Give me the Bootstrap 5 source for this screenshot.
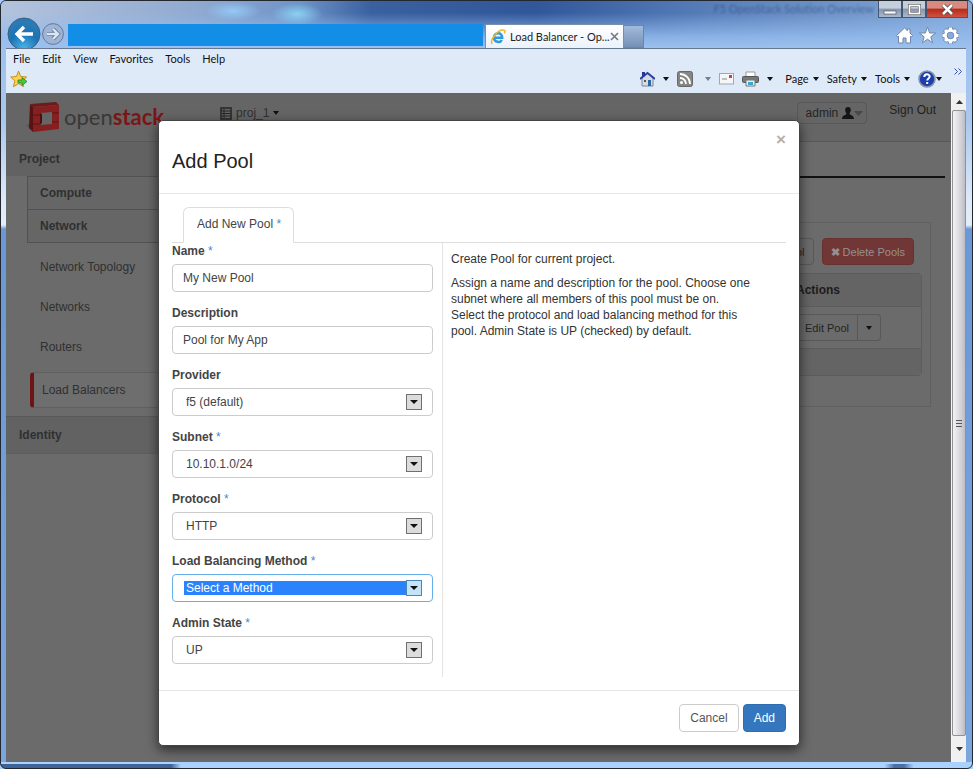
<!DOCTYPE html>
<html lang="en">
<head>
<meta charset="utf-8">
<meta name="viewport" content="width=device-width, initial-scale=1">
<title>Load Balancer - OpenStack Dashboard</title>
<link rel="stylesheet" href="https://cdn.jsdelivr.net/npm/bootstrap@5.3.0/dist/css/bootstrap.min.css">
<style>
  body { font: 12px/16px "Liberation Sans", Arial, sans-serif; color: #333; background: #a9cdf7; }
  a { text-decoration: none; color: inherit; }
  svg { display: block; flex: none; }

  /* browser window */
  .ie { min-height: 100vh; border: 1px solid #23272e; border-radius: 6px; padding: 0 6px 6px 5px;
    background:
      linear-gradient(90deg, #3f6399 0, #3f6399 170px, #a9d2ff 180px, #a9d2ff 91%, #4a6fa8 92%, #4a6fa8 93%, #a9d2ff 94%) bottom / 100% 4px no-repeat,
      linear-gradient(#a9d2ff, #a9d2ff) bottom / 100% 6px no-repeat,
      linear-gradient(180deg, #6b8fc4 0, #9dc0ee 48px, #a9c8ee 120px, #dfeaf7 200px, #e4eefa 224px, #6a98d6 228px, #7ba6dd 100%); }
  .ie-top { height: 47px; margin: 0 -6px 0 -5px; padding-left: 6px; border-radius: 5px 5px 0 0;
    font-family: Lato, "Open Sans", sans-serif;
    background:
      radial-gradient(ellipse at center, rgba(150,205,250,.9), rgba(150,205,250,0) 70%) 204px 0 / 56px 20px no-repeat,
      radial-gradient(ellipse at center, rgba(140,215,245,.9), rgba(140,215,245,0) 70%) 270px 2px / 52px 22px no-repeat,
      linear-gradient(180deg, rgba(160,195,235,0) 12px, rgba(148,188,238,.85) 36px, #9dc1ee 47px),
      linear-gradient(90deg, #b3c3dd 0, #8fa9d0 200px, #6e93c8 300px, #3a609f 370px, #31579b 55%, #5a80bb 74%, #85a9d8 100%); }
  .nav-circle { border: 0; padding: 0; background: none; }
  .address { max-width: 43%; height: 22px; border: 0; border-bottom: 1px solid #4d80b8; background: #128ee6; min-width: 0; margin: 0 2px 2px 3px; }
  .tab-page { width: 139px; height: 24px; padding: 0 4px; font-size: 11px; color: #222; background: linear-gradient(#fff, #eaf2fc); border: 1px solid #7b8ea9; border-bottom: 0; }
  .tab-new { width: 20px; height: 23px; border: 1px solid #6e85a6; border-left: 0; background: linear-gradient(#a3bbdb, #7490b5); padding: 0; }
  .win-btns button { width: 24px; height: 17px; border: 1px solid #46566f; border-top: 0; padding: 0; background: linear-gradient(#c4cedd 45%, #8495ae 50%, #a9b9cf); display: grid; place-items: center; }
  .win-btns .w-close { width: 42px; background: linear-gradient(#d98a80 45%, #b52a1c 50%, #cf5340); }
  .behind { color: #28426f; opacity: .55; filter: blur(1px); font-size: 11px; }
  .ie-bars { background: #dfeaf9; border-top: 1px solid #66788f; height: 45px; font: 11px/16px Lato, "Open Sans", sans-serif; color: #111; }
  .menu-row { padding: 2px 7px 0 7px; gap: 12px; }
  .tool-row { padding: 0 4px; height: 24px; }
  .ie-bars button { border: 0; padding: 0; background: none; color: inherit; }
  .tri { width: 0; height: 0; border: 3px solid transparent; border-top: 4px solid #111; border-bottom: 0; }

  /* page viewport */
  .view { background: #6b6b6b; min-width: 0; color: #303030; }
  .os-head { height: 49px; background: #656565; border-bottom: 1px solid #585858; }
  .brandname { font: 22px/32px Lato, "Open Sans", sans-serif; color: #383838; }
  .brandname span { color: #7c1517; font-weight: bold; }
  .side { width: 190px; }
  .side-main { background: #626262; font-weight: bold; font-size: 12px; line-height: 34px; padding-left: 13px; }
  .side-low { border-top: 1px solid #595959; border-bottom: 1px solid #5e5e5e; line-height: 36px; }
  .side-sub { margin-left: 21px; border: 1px solid #515151; border-bottom: 0; background: #666; font-weight: bold; font-size: 12px; line-height: 32px; padding-left: 12px; }
  .side-last { border-bottom: 1px solid #515151; }
  .side-link { display: block; margin-left: 34px; line-height: 40px; }
  .side-active { margin: 5px 0 8px 24px; border: 1px solid #606060; border-left: 4px solid #6f1414; border-radius: 4px 0 0 4px; padding-left: 8px; line-height: 34px; background: #6e6e6e; }
  .dim-btn { border: 1px solid #585858; border-radius: 4px; background: #6b6b6b; color: #242424; padding: 0 8px; height: 27px; font-size: 11px; }
  .dim-del { background: #713636; border-color: #693030; color: #989090; }
  .user-btn { height: 22px; font-size: 12px; padding: 0 3px 0 8px; background: #656565; }
  .os-right { padding: 9px 15px 0 0; }
  .sign-out { margin-left: 22px; color: #202020; }
  .rule { height: 36px; border-bottom: 2px solid #111; margin-right: 6px; }
  .pools { border: 1px solid #606060; padding: 15px 8px 30px 9px; margin: 44px 20px 0 0; }
  .pools table { border: 1px solid #5c5c5c; border-collapse: separate; border-spacing: 0; border-radius: 4px; width: 100%; }
  .pools th, .pools td { padding: 0 11px; }
  .pools th { height: 33px; border-bottom: 1px solid #5c5c5c; color: #1c1c1c; }
  .pools .acts { width: 136px; }
  .pools td { height: 41px; }
  .pools .strip { background: #646464; }
  .pools .strip td { height: 27px; border-top: 1px solid #5c5c5c; }

  /* scroll bar */
  .scroller { width: 15px; background: #e4e4e6; border-left: 1px solid #f4f4f4; }
  .scroll-end { height: 17px; background: #f0f0f0; display: grid; place-items: center; }
  .scroll-low { height: 26px; }
  .scroll-thumb { border: 1px solid #8f9196; border-radius: 2px; background: linear-gradient(90deg, #f3f3f5, #dcdcdf 50%, #bcbdc4); display: grid; place-items: center; }

  /* dialog */
  .dlg-layer { position: absolute; inset: 0; padding: 27px 151px 0 152px; }
  .dlg { background: #fff; color: #333; border-radius: 5px; border: 1px solid #444; box-shadow: 0 4px 12px rgba(0,0,0,.6); }
  .dlg-head { height: 73px; padding: 0 13px; border-bottom: 1px solid #e8e8e8; }
  .dlg-head h1 { font-size: 20px; line-height: 24px; margin: 28px 0 0; color: #222; }
  .x-btn { border: 0; background: none; padding: 0; margin-top: 9px; color: #b0b0b0; font: bold 17px/20px "Liberation Sans", sans-serif; }
  .dlg-body { padding: 13px; }
  .dlg .nav-tabs { border-color: #ddd; padding-left: 11px; }
  .dlg .nav-tabs .nav-link.active { padding: 8px 12px 9px 13px; border-color: #ddd #ddd #fff; color: #444; line-height: 17px; }
  .req { color: #428bca; font-weight: normal; font-size: 12px; }
  .fields { width: 271px; padding-right: 9px; border-right: 1px solid #e4e4e4; }
  .fld { margin-bottom: 13px; }
  .fld label { display: block; font-weight: bold; color: #444; line-height: 16px; margin-bottom: 5px; }
  .fld .form-control, .fld .form-select { height: 28px; font-size: 12px; line-height: 16px; padding: 5px 10px; border: 1px solid #ccc; border-radius: 4px; color: #444; }
  .fld .form-select { background-image: none; padding-left: 13px; }
  .pick { position: relative; }
  .pick svg { position: absolute; right: 11px; top: 6px; pointer-events: none; }
  .fld .pick-on { border-color: #66afe9; color: #fff; background: linear-gradient(#2a83fc, #2a83fc) 11px 6px / calc(100% - 37px) 14px no-repeat #fff; }
  .note { padding: 8px 28px 0 8px; line-height: 16px; color: #333; }
  .dlg-foot { border-top: 1px solid #e5e5e5; padding: 13px; gap: 4px; }
  .dlg-foot .btn { font-size: 12px; line-height: 16px; padding: 5px 10px; border-radius: 4px; }
  .dlg-foot .b-cancel { border-color: #ccc; color: #555; }
  .dlg-foot .b-add { background: #3577be; border-color: #2f6cb0; color: #fff; }
</style>
</head>
<body>
<div class="ie d-flex flex-column">
  <header class="ie-top d-flex">
    <button class="nav-circle align-self-end" aria-label="Back"><svg width="34" height="31" viewBox="0 0 34 31"><defs><radialGradient id="gb" cx=".5" cy=".95" r=".8"><stop offset="0" stop-color="#4bb5e8"/><stop offset=".6" stop-color="#1b73b5"/><stop offset="1" stop-color="#2a7bb5"/></radialGradient></defs><circle cx="17" cy="17" r="16" fill="url(#gb)" stroke="#3d5f83"/><path d="M26 17H11M17 10l-7 7 7 7" fill="none" stroke="#fff" stroke-width="3.4"/></svg></button>
    <button class="nav-circle align-self-end" aria-label="Forward"><svg width="24" height="25" viewBox="-1 0 24 25"><circle cx="11" cy="11" r="10.4" fill="#9fb5d6" stroke="#66799b"/><path d="M5 11h10M11 6l5 5-5 5" fill="none" stroke="#66799b" stroke-width="4"/><path d="M5 11h10M11 6l5 5-5 5" fill="none" stroke="#dbe5f3" stroke-width="2.4"/></svg></button>
    <input class="address flex-fill align-self-end" aria-label="Address">
    <div class="d-flex align-items-end">
      <div class="tab-page d-flex align-items-center">
        <svg width="16" height="16" viewBox="0 0 15 16"><path d="M3.500 8.800h8.200C11.800 2.500 3.400 3.100 3.500 8.800C3.700 13.800 10 13.800 11.300 10.900" fill="none" stroke="#2c9be0" stroke-width="2.500"/><path d="M1.600 15C-1 11 8-.5 13.700 1.300c1 .5.800 2 .2 3" fill="none" stroke="#f0b928" stroke-width="1.600"/></svg>
        <span class="ms-1 flex-fill text-nowrap">Load Balancer - Op...</span>
        <svg width="9" height="9" viewBox="0 0 9 9"><path d="M1 1l7 7M8 1L1 8" stroke="#777" stroke-width="1.600"/></svg>
      </div>
      <button class="tab-new" aria-label="New tab"></button>
    </div>
    <div class="ms-auto d-flex flex-column">
      <div class="d-flex">
        <span class="behind text-nowrap me-1">F5 OpenStack Solution Overview</span>
        <div class="win-btns d-flex me-1">
          <button aria-label="Minimize"><svg width="14" height="12"><rect x="1" y="8" width="12" height="3" fill="#fff" stroke="#555" stroke-width=".7"/></svg></button>
          <button aria-label="Maximize"><svg width="13" height="11"><rect x="1.500" y="1.500" width="10" height="8" fill="none" stroke="#555" stroke-width="3"/><rect x="1.500" y="1.500" width="10" height="8" fill="none" stroke="#fff" stroke-width="1.800"/></svg></button>
          <button class="w-close" aria-label="Close"><svg width="13" height="11"><path d="M2 1l9 9M11 1l-9 9" stroke="#544" stroke-width="4"/><path d="M2 1l9 9M11 1l-9 9" stroke="#fff" stroke-width="2.500"/></svg></button>
        </div>
      </div>
      <div class="d-flex gap-1 justify-content-end align-items-center mt-2 pe-2 me-1">
        <svg width="19" height="19" viewBox="0 0 19 19"><path d="M1.500 9.500L9.500 2l3 2.700V3h2.500v4l2.500 2.500-1 1.500-1-.8V17h-4.500v-5H8v5H3.500v-6.800l-1 .8z" fill="#fff" stroke="#7186a5"/></svg>
        <svg width="19" height="19" viewBox="0 0 19 19"><path d="M9.500 1l2.100 6h6l-4.800 3.800 1.800 6-5.100-3.600-5.100 3.600 1.800-6L1.400 7h6z" fill="#fff" stroke="#7186a5"/></svg>
        <svg width="19" height="19" viewBox="0 0 19 19"><g stroke="#7186a5" stroke-width="4.500"><path d="M9.500 1v17M1 9.500h17M3.500 3.500l12 12M15.500 3.500l-12 12"/></g><g stroke="#fff" stroke-width="3"><path d="M9.500 1.500v16M1.500 9.500h16M4 4l11 11M15 4L4 15"/></g><circle cx="9.500" cy="9.500" r="5" fill="#86aadd" stroke="#fff" stroke-width="3"/><circle cx="9.500" cy="9.500" r="3.300" fill="#86aadd" stroke="#7186a5" stroke-width=".8"/></svg>
      </div>
    </div>
  </header>

  <div class="ie-bars">
    <nav class="menu-row d-flex"><button>File</button><button>Edit</button><button>View</button><button>Favorites</button><button>Tools</button><button>Help</button></nav>
    <div class="tool-row d-flex align-items-center justify-content-between">
      <svg width="18" height="18" viewBox="0 0 18 18"><path d="M8.500 1l2.200 5.500 6 .5-4.600 3.900 1.500 5.800-5.100-3.100-5.100 3.100 1.500-5.800L.7 7l5.800-.5z" fill="#fbd34f" stroke="#c98f1c"/><path d="M8 10h4V7.500l5 4-5 4V13H8z" fill="#4fc23f" stroke="#278a20" stroke-width=".8"/></svg>
      <div class="d-flex align-items-center gap-2">
        <svg width="15" height="16" viewBox="0 0 15 16"><path d="M2 7v8h11V7L7.500 2z" fill="#d4dbe6" stroke="#7b869b"/><path d="M0 8l7.500-6L15 8" fill="none" stroke="#2b3c9c" stroke-width="1.800"/><path d="M2 1h3v3l-3 2z" fill="#2633a6"/><path d="M8 9h3v6H8z" fill="#266aa8"/><path d="M4 9h2v2H4z" fill="#654"/></svg>
        <i class="tri"></i>
        <svg width="16" height="16" viewBox="0 0 16 16"><rect x=".5" y=".5" width="15" height="15" rx="2" fill="#858585" stroke="#686868"/><circle cx="4.500" cy="11.500" r="1.500" fill="#fff"/><path d="M3 7a6 6 0 016 6M3 3a10 10 0 0110 10" fill="none" stroke="#fff" stroke-width="1.800"/></svg>
        <i class="tri opacity-50 ms-1"></i>
        <svg width="15" height="12" viewBox="0 0 15 12"><rect x=".5" y=".5" width="14" height="10.500" fill="#f6f6f8" stroke="#a5a5ab"/><rect x="10" y="2" width="3" height="3" fill="#d83a3a"/><path d="M3 6h5" stroke="#888"/></svg>
        <svg width="17" height="16" viewBox="0 0 17 16"><path d="M4 1h9v5H4z" fill="#fff" stroke="#999"/><rect x=".5" y="5.500" width="16" height="6" rx="1" fill="#777" stroke="#555"/><path d="M4 9h9v6H4z" fill="#dff0fb" stroke="#777"/><path d="M6 11h5v3H6z" fill="#3aa8cc"/></svg>
        <i class="tri"></i>
        <button class="d-flex align-items-center gap-1 ms-1">Page <i class="tri"></i></button>
        <button class="d-flex align-items-center gap-1">Safety <i class="tri"></i></button>
        <button class="d-flex align-items-center gap-1">Tools <i class="tri"></i></button>
        <button class="d-flex align-items-center" aria-label="Help"><svg width="18" height="18" viewBox="0 0 18 18"><circle cx="9" cy="9" r="8" fill="#1c3fae" stroke="#8b93a8" stroke-width="1.600"/><path d="M6.300 7c0-3.600 5.400-3.300 5.400-.4 0 1.900-2.500 1.800-2.500 4M9.200 12v2" fill="none" stroke="#fff" stroke-width="2"/></svg><i class="tri"></i></button>
        <svg class="ms-1 mb-3" width="8" height="7" viewBox="0 0 8 7"><path d="M.5.500l3 3-3 3M4.500.500l3 3-3 3" fill="none" stroke="#3b51a5"/></svg>
      </div>
    </div>
  </div>

  <div class="d-flex flex-fill">
    <main class="view position-relative flex-fill">
      <div class="os-head d-flex">
        <a href="#" class="d-flex align-items-start ps-3 pt-2 ms-1">
          <svg width="34" height="32" viewBox="0 0 34 32"><path d="M0 24l5 4v-6z" fill="#555"/><path d="M4 3l3 3v25l-4-4z" fill="#581213"/><path d="M4 3l26-2 3 3-26 2z" fill="#6e1a1b"/><path fill-rule="evenodd" d="M7 6l26-2v24L7 31zM14 12v12l12-1V11z" fill="#851f20"/><path d="M14 12l2 1v9l-2 2z" fill="#4a0f10"/><path d="M7 14h7M7 23h7M26 12h7M26 21h7" stroke="#5a1415"/></svg>
          <span class="brandname ms-1">open<span>stack</span></span>
        </a>
        <div class="d-flex align-items-center gap-1 mt-2 ms-5 align-self-start ps-2 pt-1">
          <svg width="12" height="13" viewBox="0 0 12 13"><path d="M1 1h10v11H1z" fill="none" stroke="#242424" stroke-width="1.500"/><path d="M2 4h8M2 6.500h8M2 9h8M4 2v9" stroke="#242424"/></svg>
          <span>proj_1</span><i class="tri"></i>
        </div>
        <div class="os-right ms-auto d-flex align-items-start">
          <button class="dim-btn user-btn d-flex align-items-center">admin <svg class="ms-1" width="12" height="12" viewBox="0 0 12 12"><path d="M6 0c4 0 3 5 1.500 6.500C8 8.500 12 8 12 12H0c0-4 4-3.500 4.500-5.500C3 5 2 0 6 0z" fill="#151515"/></svg><svg width="9" height="5"><path d="M0 0h9L4.500 5z" fill="#484848"/></svg></button>
          <a href="#" class="sign-out">Sign Out</a>
        </div>
      </div>
      <div class="d-flex">
        <nav class="side">
          <div class="side-main">Project</div>
          <div class="side-sub">Compute</div>
          <div class="side-sub side-last">Network</div>
          <div class="pt-1">
            <a href="#" class="side-link">Network Topology</a><a href="#" class="side-link">Networks</a><a href="#" class="side-link">Routers</a>
            <a href="#" class="side-link side-active">Load Balancers</a>
          </div>
          <div class="side-main side-low">Identity</div>
        </nav>
        <section class="flex-fill ps-4">
          <div class="rule"></div>
          <div class="pools">
            <div class="d-flex justify-content-end gap-2 mb-2 pe-2">
              <button class="dim-btn">Add Pool</button>
              <button class="dim-btn dim-del"><b>✖</b> Delete Pools</button>
            </div>
            <table>
              <thead><tr class="strip"><th>Name</th><th class="acts">Actions</th></tr></thead>
              <tbody><tr><td></td><td><div class="btn-group"><button class="dim-btn rounded-end-0 text-nowrap">Edit Pool</button><button class="dim-btn rounded-start-0 border-start-0" aria-label="More"><i class="tri d-block"></i></button></div></td></tr>
              <tr class="strip"><td colspan="2"></td></tr></tbody>
            </table>
          </div>
        </section>
      </div>

      <div class="dlg-layer">
        <div class="dlg" role="dialog" aria-labelledby="dlg-title">
          <div class="dlg-head d-flex justify-content-between align-items-start"><h1 id="dlg-title" class="fw-normal">Add Pool</h1><button class="x-btn" aria-label="Close">×</button></div>
          <div class="dlg-body">
            <ul class="nav nav-tabs"><li class="nav-item"><a class="nav-link active" href="#">Add New Pool <span class="req">*</span></a></li></ul>
            <div class="d-flex">
              <form class="fields flex-shrink-0" id="pool">
                <div class="fld"><label for="n">Name <span class="req">*</span></label><input id="n" class="form-control" value="My New Pool"></div>
                <div class="fld"><label for="d">Description</label><input id="d" class="form-control" value="Pool for My App"></div>
                <div class="fld"><label for="p">Provider</label><div class="pick"><select id="p" class="form-select"><option>f5 (default)</option></select><svg width="16" height="16"><use href="#dd"/></svg></div></div>
                <div class="fld"><label for="s">Subnet <span class="req">*</span></label><div class="pick"><select id="s" class="form-select"><option>10.10.1.0/24</option></select><svg width="16" height="16"><use href="#dd"/></svg></div></div>
                <div class="fld"><label for="r">Protocol <span class="req">*</span></label><div class="pick"><select id="r" class="form-select"><option>HTTP</option></select><svg width="16" height="16"><use href="#dd"/></svg></div></div>
                <div class="fld"><label for="m">Load Balancing Method <span class="req">*</span></label><div class="pick"><select id="m" class="form-select pick-on"><option>Select a Method</option></select><svg width="16" height="16"><rect x=".5" y=".5" width="15" height="15" fill="#c3e3f9" stroke="#4b87b5"/><path d="M4 6h8l-4 4z" fill="#111"/></svg></div></div>
                <div class="fld"><label for="a">Admin State <span class="req">*</span></label><div class="pick"><select id="a" class="form-select"><option>UP</option></select><svg width="16" height="16"><use href="#dd"/></svg></div></div>
              </form>
              <div class="note"><p class="mb-2">Create Pool for current project.</p><p class="mb-0">Assign a name and description for the pool. Choose one subnet where all members of this pool must be on.<br>Select the protocol and load balancing method for this pool. Admin State is UP (checked) by default.</p></div>
            </div>
          </div>
          <div class="dlg-foot d-flex justify-content-end"><button class="btn b-cancel" type="button">Cancel</button><button class="btn b-add" type="submit" form="pool">Add</button></div>
        </div>
      </div>
    </main>
    <div class="scroller d-flex flex-column" aria-hidden="true">
      <div class="scroll-end"><svg width="7" height="4"><path d="M0 4h7L3.500 0z" fill="#333"/></svg></div>
      <div class="scroll-thumb flex-fill"><svg width="6" height="8"><path d="M0 1.500h6M0 4.500h6M0 7.500h6" stroke="#555"/></svg></div>
      <div class="scroll-end scroll-low"><svg width="7" height="4"><path d="M0 0h7L3.500 4z" fill="#333"/></svg></div>
    </div>
  </div>
</div>
<svg width="0" height="0" class="position-absolute"><defs><g id="dd"><rect x=".5" y=".5" width="15" height="15" fill="#dcdcdc" stroke="#707070"/><path d="M4 6h8l-4 4z" fill="#111"/></g></defs></svg>
<script src="https://cdn.jsdelivr.net/npm/bootstrap@5.3.0/dist/js/bootstrap.bundle.min.js"></script>
</body>
</html>
